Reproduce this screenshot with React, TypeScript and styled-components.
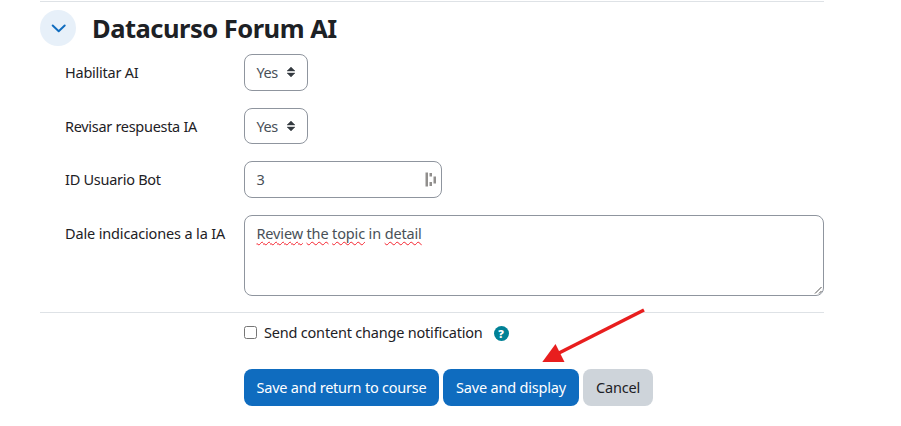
import React from "react";
import styled, { createGlobalStyle } from "styled-components";

const GlobalStyle = createGlobalStyle`
  *, *::before, *::after { box-sizing: border-box; }
  body {
    margin: 0;
    background: #fff;
    color: #1d2125;
    font: 15px/22px "Noto Sans", "Open Sans", sans-serif;
  }
`;

const Page = styled.main`
  position: relative;
  width: 901px;
  height: 426px;
  padding: 1px 77px 0 40px;
  overflow: hidden;
`;

const Section = styled.section`
  height: 312px;
  border-top: 1px solid #dee2e6;
  border-bottom: 1px solid #dee2e6;
`;

const Header = styled.header`
  display: flex;
  align-items: center;
  gap: 16px;
  height: 36px;
  margin-top: 8px;
`;

const Toggle = styled.span`
  display: grid;
  place-items: center;
  width: 36px;
  height: 36px;
  border-radius: 50%;
  background: #e7f0f9;
`;

const Title = styled.h3`
  margin: 0;
  font-size: 25.5px;
  line-height: 34px;
  font-weight: 700;
  letter-spacing: -0.5px;
  white-space: nowrap;
`;

const Fields = styled.div`
  display: grid;
  grid-template-rows: 54px 53px 54px 81px;
  padding-left: 25px;
  margin-top: 8px;
`;

const Row = styled.div`
  display: grid;
  grid-template-columns: 179px 1fr;
  align-items: start;
`;

const Text = styled.span<{ $track?: number }>`
  font-size: 14.5px;
  line-height: 22px;
  white-space: pre;
  letter-spacing: ${(p) => p.$track ?? 0}px;
`;

const Label = styled.label`
  display: flex;
  padding-top: 7px;
`;

const Control = styled.div<{ $w: number; $h?: number }>`
  position: relative;
  display: flex;
  align-items: flex-start;
  justify-content: space-between;
  width: ${(p) => p.$w}px;
  height: ${(p) => p.$h ?? 37}px;
  padding: 6px 12px 0 11.5px;
  border: 1px solid #8f959e;
  border-radius: 8px;
  color: #495057;
`;

const SortIcon = styled.svg`
  margin-top: 6px;
`;

const BotIcon = styled.svg`
  margin: 4px -8px 0 0;
`;

const Misspelled = styled.span`
  text-decoration: underline wavy #f5222d 1.4px;
  text-decoration-skip-ink: none;
  text-underline-offset: 2px;
`;

const Grip = styled.svg`
  position: absolute;
  right: 0;
  bottom: 0;
`;

const Footer = styled.footer`
  display: flex;
  flex-direction: column;
  padding: 8px 0 0 204px;
`;

const Notify = styled.div`
  display: flex;
  align-items: center;
  height: 22px;
`;

const Checkbox = styled.span`
  width: 13px;
  height: 13px;
  margin-right: 7px;
  border: 1px solid #767676;
  border-radius: 2.5px;
`;

const Help = styled.span`
  display: grid;
  place-items: center;
  width: 15px;
  height: 15px;
  margin: 2px 0 0 11px;
  border-radius: 50%;
  background: #008196;
  color: #fff;
  font: 800 11px/15px "Open Sans", sans-serif;
`;

const Buttons = styled.div`
  display: flex;
  gap: 4px;
  margin-top: 26px;
`;

const Button = styled.button<{ $w: number; $muted?: boolean }>`
  display: flex;
  align-items: flex-start;
  justify-content: center;
  width: ${(p) => p.$w}px;
  height: 37px;
  padding: 7px 0 0;
  border: 0;
  border-radius: 8px;
  font-family: inherit;
  background: ${(p) => (p.$muted ? "#ced4da" : "#0f6cbf")};
  color: ${(p) => (p.$muted ? "#1d2125" : "#fff")};
`;

const Arrow = styled.svg`
  position: absolute;
  left: 540px;
  top: 305px;
  pointer-events: none;
`;

const YesSelect = ({ height }: { height?: number }) => (
  <Control $w={64} $h={height}>
    <Text $track={-0.4}>Yes</Text>
    <SortIcon width="8" height="10" viewBox="0 0 8 10">
      <path d="M4 0 8 4H0ZM0 6h8L4 10Z" fill="#343a40" stroke="#343a40" strokeWidth="0.4" />
    </SortIcon>
  </Control>
);

export default function App() {
  return (
    <Page>
      <GlobalStyle />
      <Section>
        <Header>
          <Toggle>
            <svg width="16" height="10" viewBox="0 0 16 10" fill="none">
              <path d="m2.7 2.5 6 5.8 6-5.8" stroke="#0f6cbf" strokeWidth="1.9" strokeLinecap="round" strokeLinejoin="round" />
            </svg>
          </Toggle>
          <Title>Datacurso Forum AI</Title>
        </Header>
        <Fields>
          <Row>
            <Label><Text $track={-0.25}>Habilitar AI</Text></Label>
            <YesSelect />
          </Row>
          <Row>
            <Label><Text $track={-0.3}>Revisar respuesta IA</Text></Label>
            <YesSelect height={36} />
          </Row>
          <Row>
            <Label><Text $track={-0.27}>ID Usuario Bot</Text></Label>
            <Control $w={198}>
              <Text>3</Text>
              <BotIcon width="12" height="16" viewBox="0 0 12 16" fill="#918f8d">
                <path d="M0.5 0.5h2.5v14H0.5ZM4.5 1h2.5v3.5H4.5ZM4.5 10h2.5v4H4.5ZM8.5 4.5h2.5v7H8.5Z" />
              </BotIcon>
            </Control>
          </Row>
          <Row>
            <Label><Text $track={-0.15}>Dale indicaciones a la IA</Text></Label>
            <Control $w={580} $h={81}>
              <Text $track={-0.15}>
                <Misspelled>Review</Misspelled> <Misspelled>the</Misspelled>{" "}
                <Misspelled>topic</Misspelled> in <Misspelled>detail</Misspelled>
              </Text>
              <Grip width="9" height="9" viewBox="0 0 9 9" stroke="#555" strokeWidth="1">
                <path d="M1 7.5 7.5 1M5 7.5 7.5 5" />
              </Grip>
            </Control>
          </Row>
        </Fields>
      </Section>
      <Footer>
        <Notify>
          <Checkbox />
          <Text $track={-0.2}>Send content change notification</Text>
          <Help>?</Help>
        </Notify>
        <Buttons>
          <Button $w={195}><Text $track={-0.23}>Save and return to course</Text></Button>
          <Button $w={136}><Text $track={-0.2}>Save and display</Text></Button>
          <Button $w={70} $muted><Text $track={-0.2}>Cancel</Text></Button>
        </Buttons>
      </Footer>
      <Arrow width="110" height="60" viewBox="540 305 110 60">
        <path d="M644 310 557 354" stroke="#e81e1e" strokeWidth="3.6" />
        <path d="M542.3 362 555.5 344 564.5 362Z" fill="#e81e1e" />
      </Arrow>
    </Page>
  );
}
